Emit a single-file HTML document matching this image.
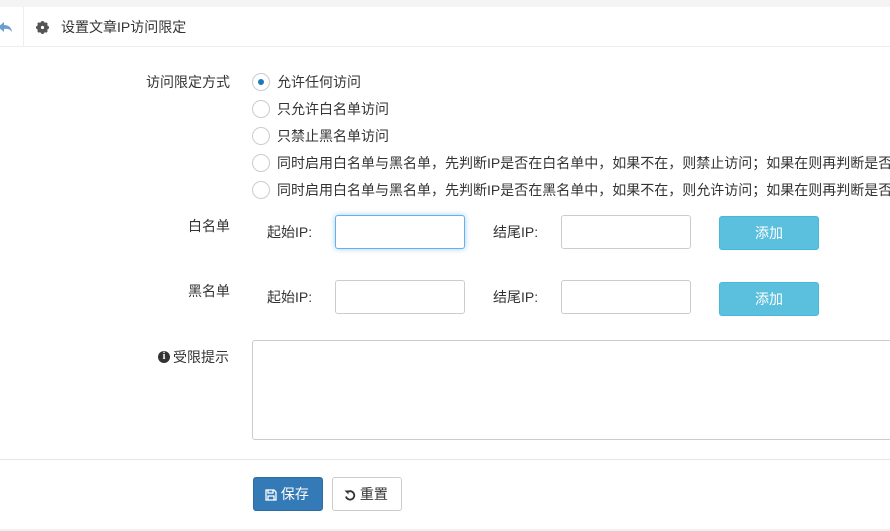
<!DOCTYPE html>
<html><head><meta charset="utf-8"><style>
*{box-sizing:border-box;margin:0;padding:0}
html,body{width:890px;height:531px;overflow:hidden}
body{background:#fff;font-family:"Liberation Sans","Noto Sans CJK SC",sans-serif;color:#333;font-size:14px;position:relative}
#w{position:absolute;left:0;top:0;width:890px;height:531px;overflow:hidden}
.a{position:absolute;white-space:nowrap;line-height:1}
.radio{position:absolute;left:252px;width:18px;height:18px;border:1px solid #ccc;border-radius:50%;background:#fff}
.radio.on::after{content:"";position:absolute;left:5px;top:5px;width:6px;height:6px;border-radius:50%;background:#1b7ab7}
.rt{position:absolute;left:277px;font-size:14px;white-space:nowrap;line-height:1}
.inp{position:absolute;width:130px;height:34px;border:1px solid #ccc;border-radius:3px;background:#fff}
.btn{position:absolute;left:719px;width:100px;height:34px;background:#5bc0de;border:1px solid #46b8da;border-radius:3px;color:#fff;text-align:center;line-height:32px;font-size:14px}
</style></head><body><div id="w">
<div class="a" style="left:0;top:0;width:890px;height:7px;background:#f4f4f4"></div>
<div class="a" style="left:0;top:46px;width:890px;height:1px;background:#eee"></div>
<div class="a" style="left:23px;top:7px;width:1px;height:39px;background:#eee"></div>
<svg class="a" style="left:0;top:19px" width="14" height="16" viewBox="0 0 14 16"><path d="M-2 8 L4 3 L4 6 Q11 6 12 13 Q9 9 4 10 L4 13 Z" fill="#6a9fcf"/></svg>
<svg class="a" style="left:36px;top:21px" width="13" height="13" viewBox="0 0 13 13"><circle cx="6.5" cy="6.5" r="4.2" fill="none" stroke="#555" stroke-width="2.6"/><g stroke="#555" stroke-width="2.4"><path d="M6.5 0v13M0 6.5h13M2 2l9 9M11 2l-9 9"/></g><circle cx="6.5" cy="6.5" r="1.6" fill="#fff"/></svg>
<div class="a" style="left:61px;top:20px">设置文章IP访问限定</div>
<div class="a" style="left:146px;top:75px">访问限定方式</div>
<div class="radio on" style="top:73px"></div><div class="rt" style="top:75px">允许任何访问</div>
<div class="radio" style="top:100px"></div><div class="rt" style="top:102px">只允许白名单访问</div>
<div class="radio" style="top:127px"></div><div class="rt" style="top:129px">只禁止黑名单访问</div>
<div class="radio" style="top:154px"></div><div class="rt" style="top:156px">同时启用白名单与黑名单，先判断IP是否在白名单中，如果不在，则禁止访问；如果在则再判断是否在黑名单中</div>
<div class="radio" style="top:181px"></div><div class="rt" style="top:183px">同时启用白名单与黑名单，先判断IP是否在黑名单中，如果不在，则允许访问；如果在则再判断是否在白名单中</div>
<div class="a" style="left:188px;top:219px">白名单</div>
<div class="a" style="left:267px;top:225px">起始IP:</div>
<div class="inp" style="left:335px;top:215px;border-color:#66afe9;box-shadow:0 0 6px rgba(102,175,233,.6)"></div>
<div class="a" style="left:493px;top:225px">结尾IP:</div>
<div class="inp" style="left:561px;top:215px"></div>
<div class="btn" style="top:216px">添加</div>
<div class="a" style="left:188px;top:284px">黑名单</div>
<div class="a" style="left:267px;top:290px">起始IP:</div>
<div class="inp" style="left:335px;top:280px"></div>
<div class="a" style="left:493px;top:290px">结尾IP:</div>
<div class="inp" style="left:561px;top:280px"></div>
<div class="btn" style="top:282px">添加</div>
<div class="a" style="left:158px;top:351px;width:12px;height:12px;border-radius:50%;background:#333;color:#fff;font-size:10px;font-weight:bold;text-align:center;line-height:12px;font-family:'Liberation Serif',serif">i</div>
<div class="a" style="left:173px;top:350px">受限提示</div>
<div class="a" style="left:252px;top:340px;width:650px;height:100px;border:1px solid #ccc;border-radius:3px"></div>
<div class="a" style="left:0;top:459px;width:890px;height:1px;background:#e5e5e5"></div>
<div class="a" style="left:253px;top:477px;width:70px;height:34px;background:#337ab7;border:1px solid #2e6da4;border-radius:3px;color:#fff;line-height:32px;padding-left:11px"><svg style="vertical-align:-2px" width="12" height="12" viewBox="0 0 12 12"><path d="M1 1h8l2 2v8H1z M3 1v3h5V1 M3 11V7h6v4" fill="none" stroke="#fff" stroke-width="1.3"/></svg> 保存</div>
<div class="a" style="left:332px;top:477px;width:70px;height:34px;background:#fff;border:1px solid #ccc;border-radius:3px;line-height:32px;padding-left:11px"><svg style="vertical-align:-2px" width="12" height="12" viewBox="0 0 12 12"><path d="M3 3.5A4.2 4.2 0 1 1 2 7.5" fill="none" stroke="#333" stroke-width="1.8"/><path d="M0.5 1.5L4.5 1.5L4.5 5.5Z" fill="#333"/></svg> 重置</div>
<div class="a" style="left:0;top:529px;width:890px;height:2px;background:#f0f0f0"></div>
</div></body></html>
